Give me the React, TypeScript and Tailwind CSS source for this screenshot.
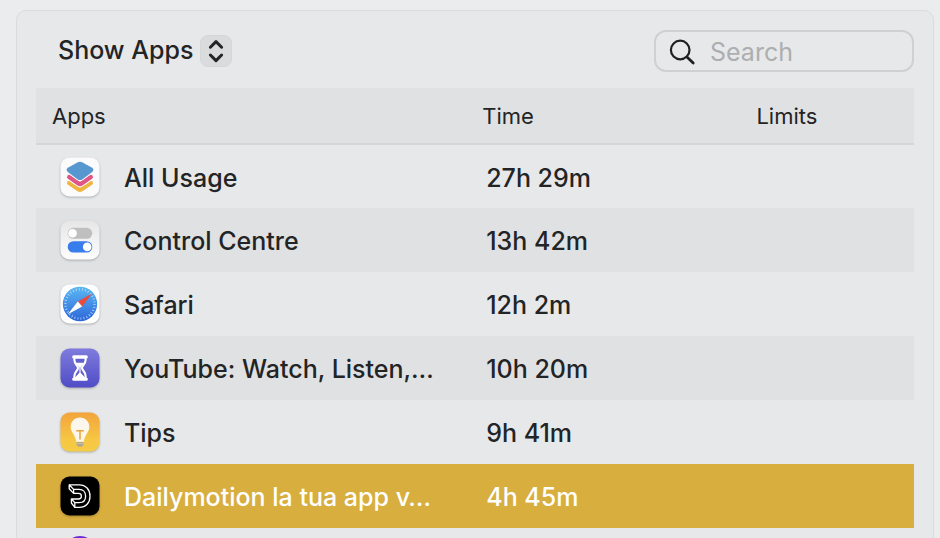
import React from "react";

function Tile({ fill, children }: { fill: string; children: React.ReactNode }) {
    return (
        <svg viewBox="0 0 40 40" className="size-10 shrink-0 overflow-visible drop-shadow-[0_1px_1px_rgba(0,0,0,0.25)]" aria-hidden="true">
            <defs>
                <linearGradient id="tile-grey" x1="0" y1="0" x2="0" y2="1">
                    <stop offset="0" stopColor="#e6e6e7" />
                    <stop offset="1" stopColor="#fdfdfd" />
                </linearGradient>
                <linearGradient id="tile-purple" x1="0" y1="0" x2="0" y2="1">
                    <stop offset="0" stopColor="#7f7cdd" />
                    <stop offset="1" stopColor="#504cc6" />
                </linearGradient>
                <linearGradient id="tile-amber" x1="0" y1="0" x2="0" y2="1">
                    <stop offset="0" stopColor="#f3a43c" />
                    <stop offset="0.7" stopColor="#f6c743" />
                    <stop offset="1" stopColor="#f6cb45" />
                </linearGradient>
                <linearGradient id="compass" x1="0" y1="0" x2="0" y2="1">
                    <stop offset="0" stopColor="#5ab8f4" />
                    <stop offset="1" stopColor="#2d66d9" />
                </linearGradient>
            </defs>
            <rect x="0.5" y="0.5" width="39" height="39" rx="9" fill={fill} />
            {children}
        </svg>
    );
}

function AllUsageIcon() {
    return (
        <Tile fill="#fbfbfb">
            <g fill="none" strokeWidth="4.4" strokeLinejoin="round" strokeLinecap="round">
                <path d="M9.2 26 18.4 32.2Q20 33.2 21.6 32.2L30.8 26" stroke="#efb543" />
                <path d="M9.2 20 18.4 26.4Q20 27.4 21.6 26.4L30.8 20" stroke="#fbfbfb" strokeWidth="6.4" />
                <path d="M9.2 20 18.4 26.4Q20 27.4 21.6 26.4L30.8 20" stroke="#df5585" />
            </g>
            <path
                d="M17.4 5.4Q20 4 22.6 5.4L32.2 10.8Q34.6 12.8 32.2 15L22.6 22.2Q20 24 17.4 22.2L7.8 15Q5.4 12.8 7.8 10.8Z"
                fill="#5797cf"
                stroke="#fbfbfb"
                strokeWidth="1.8"
                paintOrder="stroke"
            />
        </Tile>
    );
}

function ControlCentreIcon() {
    return (
        <Tile fill="url(#tile-grey)">
            <rect x="7.7" y="7.8" width="24.6" height="11" rx="5.5" fill="#bfbfc0" />
            <circle cx="12.6" cy="13.3" r="4.3" fill="#fff" />
            <rect x="7.7" y="21.2" width="24.6" height="11.4" rx="5.7" fill="#397cec" />
            <circle cx="27.2" cy="26.9" r="4.3" fill="#fff" />
        </Tile>
    );
}

function SafariIcon() {
    return (
        <Tile fill="#fff">
            <circle cx="20" cy="20" r="17.2" fill="url(#compass)" />
            <circle cx="20" cy="20" r="14.6" fill="none" stroke="#d6ecfc" strokeOpacity="0.8" strokeWidth="2.4" strokeDasharray="0.8 2.26" />
            <path d="M32 9.6 22.2 22.6 17.8 17.6Z" fill="#ec4a3c" />
            <path d="M7.8 30.2 17.8 17.6 22.2 22.6Z" fill="#fff" />
        </Tile>
    );
}

function HourglassIcon() {
    return (
        <Tile fill="url(#tile-purple)">
            <path
                d="M14.4 9.5V12C14.4 16.2 18 17.4 18 20S14.4 23.6 14.4 28V31H25.6V28C25.6 23.6 22 22.4 22 20S25.6 16.2 25.6 12V9.5Z"
                fill="#6360cf"
                stroke="#fff"
                strokeWidth="2.1"
            />
            <path d="M16 14.7H24L20.6 19.4V24.8L25 29.4V31H15V29.4L19.4 24.8V19.4Z" fill="#fff" />
            <rect x="12.2" y="7.2" width="15.6" height="3.4" rx="1.5" fill="#fff" />
            <rect x="12.2" y="29.4" width="15.6" height="3.4" rx="1.5" fill="#fff" />
        </Tile>
    );
}

function TipsIcon() {
    return (
        <Tile fill="url(#tile-amber)">
            <path d="M20 5.6C14.6 5.6 10.7 9.6 10.7 14.8C10.7 20.4 15.3 22.6 16.2 29.8H23.8C24.7 22.6 29.3 20.4 29.3 14.8C29.3 9.6 25.4 5.6 20 5.6Z" fill="#fcf7ea" />
            <path d="M16.2 18.8H23.8M20 18.8V27.4" stroke="#e9a23b" strokeWidth="1.5" fill="none" />
            <path d="M16.6 30.2H23.4V32.4Q23.2 34.4 21 34.6H19Q16.8 34.4 16.6 32.4Z" fill="#a9a294" />
            <path d="M16.6 31.8H23.4" stroke="#d9d4c6" strokeWidth="0.7" />
        </Tile>
    );
}

function DailymotionIcon() {
    return (
        <Tile fill="#000">
            <g fill="none" stroke="#fff" strokeWidth="1.3" strokeLinejoin="round">
                <path d="M9.2 8.8H19.4C25.8 8.8 30 13.6 30 20.2S25.8 31.4 19.4 31.4H14.8L11.4 27V23" />
                <path d="M9.2 8.8 13.6 13.4H19.2C23 13.4 25.6 16 25.6 20.2S23 26.6 19.2 26.6H14.8L11.4 23H18.4C20.4 23 21.4 22 21.4 20.2S20.4 17.4 18.4 17.4H13.6L9.2 12.8ZM13.6 13.4V17.4M14.8 26.6V31.4" />
            </g>
        </Tile>
    );
}

function PurpleIcon() {
    return (
        <svg viewBox="0 0 40 40" className="size-10 shrink-0 overflow-visible" aria-hidden="true">
            <circle cx="20" cy="12" r="16" fill="#6a2ad6" />
        </svg>
    );
}

const apps = [
    { name: "All Usage", time: "27h 29m", Icon: AllUsageIcon },
    { name: "Control Centre", time: "13h 42m", Icon: ControlCentreIcon },
    { name: "Safari", time: "12h 2m", Icon: SafariIcon },
    { name: "YouTube: Watch, Listen,…", time: "10h 20m", Icon: HourglassIcon },
    { name: "Tips", time: "9h 41m", Icon: TipsIcon },
    { name: "Dailymotion la tua app v…", time: "4h 45m", Icon: DailymotionIcon, selected: true },
    { name: "", time: "", Icon: PurpleIcon },
];

export default function App() {
    return (
        <main className="h-screen overflow-hidden bg-[#ebecee] pt-[10px] pr-[6px] pl-4 font-['Inter',sans-serif] text-[25px] font-[450] text-[#232425]">
            <section className="rounded-[10px] border border-[#dadbdd] bg-[#e7e8ea] px-[19px] pt-[19px] pb-5">
                <header className="mb-4 flex h-[42px] items-center justify-between">
                    <div className="relative ml-[22px] flex items-center">
                        <select aria-label="Show" className="h-10 appearance-none bg-transparent pr-[38px] outline-none">
                            <option>Show Apps</option>
                        </select>
                        <span className="pointer-events-none absolute right-0 flex size-8 items-center justify-center rounded-lg border border-[#d5d6d8] bg-[#dadbdd]">
                            <svg viewBox="0 0 32 32" className="size-8 shrink-0" fill="none" stroke="#232425" strokeWidth="3" strokeLinecap="round" strokeLinejoin="round" aria-hidden="true">
                                <path d="M10.4 12.2 16 6.6 21.6 12.2M10.4 20 16 25.6 21.6 20" />
                            </svg>
                        </span>
                    </div>
                    <label className="flex h-[42px] w-[260px] items-center gap-[14px] rounded-xl border-2 border-[#cfd0d2] pl-3">
                        <svg viewBox="0 0 28 28" className="size-7 shrink-0" fill="none" stroke="#1f2021" strokeLinecap="round" aria-hidden="true">
                            <circle cx="12.2" cy="13" r="9.3" strokeWidth="2.2" />
                            <path d="M19.2 20.2 25.2 26" strokeWidth="2.8" />
                        </svg>
                        <input type="search" aria-label="Search" placeholder="Search" className="w-full min-w-0 bg-transparent pt-1 font-normal outline-none placeholder:text-[#adaeb0]" />
                    </label>
                </header>

                <table className="w-full table-fixed border-collapse text-left">
                    <thead>
                        <tr className="h-14 border-b-2 border-[#d5d6d8] bg-[#e0e1e3] text-[22px]">
                            <th className="w-[49%] pt-0.5 pl-4 font-normal">Apps</th>
                            <th className="w-[31%] pt-0.5 pl-4 font-normal">Time</th>
                            <th className="pt-0.5 pl-[18px] font-normal">Limits</th>
                        </tr>
                    </thead>
                    <tbody>
                        {apps.map(({ name, time, Icon, selected }) => (
                            <tr key={name} className={selected ? "h-16 bg-[#d8ae3e] font-medium text-white" : "h-16 even:bg-[#e0e1e3]"}>
                                <td className="pl-6">
                                    <div className="flex items-center gap-6">
                                        <Icon />
                                        <span className="truncate pt-1">{name}</span>
                                    </div>
                                </td>
                                <td className="pt-1 pl-5">{time}</td>
                                <td />
                            </tr>
                        ))}
                    </tbody>
                </table>
            </section>
        </main>
    );
}
